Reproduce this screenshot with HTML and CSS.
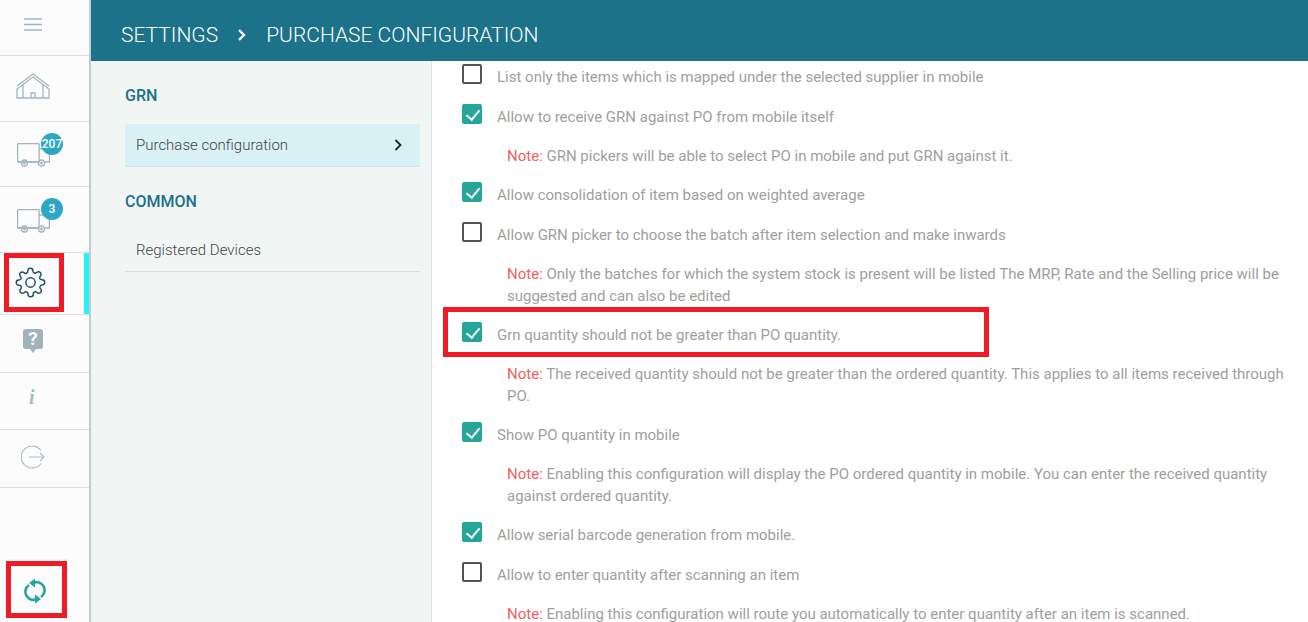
FILE: index.html
```html
<!DOCTYPE html>
<html lang="en">
<head>
  <meta charset="UTF-8">
  <title>Purchase configuration</title>
  <link rel="stylesheet" href="styles.css">
</head>
<body>
  <nav class="sidebar">
    <div class="side-row row-menu">
      <svg width="18" height="13" viewBox="0 0 18 13"><path d="M0 1h18M0 6.500h18M0 12h18" stroke="#a3b5bd" stroke-width="1.500" fill="none"/></svg>
    </div>
    <div class="side-row row-home">
      <svg width="34" height="26" viewBox="0 0 34 26" fill="none" stroke="#a3b5bd" stroke-width="1.300"><path d="M1 13 17 1l16 12"/><path d="M1 25V16L17 4l16 12v9zM7 25V12M27 25V12M15 25v-5h4v5"/></svg>
    </div>
    <div class="side-row row-truck">
      <svg width="33" height="24" viewBox="0 0 33 24" fill="none" stroke="#a3b5bd" stroke-width="1.300"><rect x=".6" y=".6" width="21.500" height="18.400" rx="1"/><path d="M22 6h6l4.400 5v8H28M.6 19H4M11 19h10"/><circle cx="7.500" cy="20" r="3"/><circle cx="7.500" cy="20" r=".8"/><circle cx="24.500" cy="20" r="3"/><circle cx="24.500" cy="20" r=".8"/></svg>
      <span class="badge">207</span>
    </div>
    <div class="side-row row-truck2">
      <svg width="33" height="24" viewBox="0 0 33 24" fill="none" stroke="#a3b5bd" stroke-width="1.300"><rect x=".6" y=".6" width="21.500" height="18.400" rx="1"/><path d="M22 6h6l4.400 5v8H28M.6 19H4M11 19h10"/><circle cx="7.500" cy="20" r="3"/><circle cx="7.500" cy="20" r=".8"/><circle cx="24.500" cy="20" r="3"/><circle cx="24.500" cy="20" r=".8"/></svg>
      <span class="badge">3</span>
    </div>
    <div class="side-row row-gear active">
      <svg width="31" height="31" viewBox="0 0 24 24" fill="none" stroke="#1d5266" stroke-width="1.150" stroke-linejoin="round"><circle cx="12" cy="12" r="3.600"/><path d="M19.400 15a1.650 1.650 0 0 0 .33 1.820l.06.06a2 2 0 1 1-2.830 2.830l-.06-.06a1.650 1.650 0 0 0-2.800 1.170V21a2 2 0 1 1-4 0v-.09A1.650 1.650 0 0 0 7.300 19.730l-.06.06a2 2 0 1 1-2.830-2.830l.06-.06a1.650 1.650 0 0 0-1.170-2.800H3a2 2 0 1 1 0-4h.09A1.650 1.650 0 0 0 4.270 7.300l-.06-.06a2 2 0 1 1 2.830-2.830l.06.06a1.650 1.650 0 0 0 2.800-1.170V3a2 2 0 1 1 4 0v.09a1.650 1.650 0 0 0 2.800 1.170l.06-.06a2 2 0 1 1 2.830 2.830l-.06.06a1.650 1.650 0 0 0 1.170 2.800H21a2 2 0 1 1 0 4h-.09a1.650 1.650 0 0 0-1.510 1.110z"/></svg>
    </div>
    <div class="side-row row-help">
      <span class="help-icon">?</span>
    </div>
    <div class="side-row row-info">
      <span class="info-icon">i</span>
    </div>
    <div class="side-row row-exit">
      <svg width="24" height="24" viewBox="0 0 24 24" fill="none" stroke="#a9bec6" stroke-width="1.200"><path d="M20 5.500A11 11 0 1 0 20 18.500"/><path d="M8 12h15M19 8l4 4-4 4"/></svg>
    </div>
    <div class="side-sync">
      <svg width="22" height="26" viewBox="0 0 22 26" fill="none"><path d="M8 5.500A8 8 0 0 1 17 19" stroke="#26a69a" stroke-width="2.600"/><path d="M14 20.500A8 8 0 0 1 5 7" stroke="#26a69a" stroke-width="2.600"/><path d="M11 .5v9L5 5zM11 16.500v9l6-4.500z" fill="#26a69a"/></svg>
    </div>
  </nav>

  <div class="main">
    <header class="topbar">
      <span>SETTINGS</span>
      <svg width="10" height="14" viewBox="0 0 10 14"><path d="M2 2l5 5-5 5" stroke="#fff" stroke-width="2.400" fill="none"/></svg>
      <span>PURCHASE CONFIGURATION</span>
    </header>
    <div class="body-wrap">
      <aside class="subnav">
        <h3>GRN</h3>
        <div class="sub-item selected">
          Purchase configuration
          <svg width="8" height="12" viewBox="0 0 8 12"><path d="M1.500 1l5 5-5 5" stroke="#222" stroke-width="1.800" fill="none"/></svg>
        </div>
        <h3 class="second">COMMON</h3>
        <div class="sub-item">Registered Devices</div>
      </aside>
      <section class="content">
        <div class="list">
          <div class="opt"><span class="box"></span>List only the items which is mapped under the selected supplier in mobile</div>
          <div class="opt"><span class="box on"></span>Allow to receive GRN against PO from mobile itself</div>
          <p class="note"><b>Note:</b> GRN pickers will be able to select PO in mobile and put GRN against it.</p>
          <div class="opt"><span class="box on"></span>Allow consolidation of item based on weighted average</div>
          <div class="opt"><span class="box"></span>Allow GRN picker to choose the batch after item selection and make inwards</div>
          <p class="note"><b>Note:</b> Only the batches for which the system stock is present will be listed The MRP, Rate and the Selling price will be suggested and can also be edited</p>
          <div class="opt"><span class="box on"></span>Grn quantity should not be greater than PO quantity.</div>
          <p class="note"><b>Note:</b> The received quantity should not be greater than the ordered quantity. This applies to all items received through PO.</p>
          <div class="opt"><span class="box on"></span>Show PO quantity in mobile</div>
          <p class="note"><b>Note:</b> Enabling this configuration will display the PO ordered quantity in mobile. You can enter the received quantity against ordered quantity.</p>
          <div class="opt"><span class="box on"></span>Allow serial barcode generation from mobile.</div>
          <div class="opt"><span class="box"></span>Allow to enter quantity after scanning an item</div>
          <p class="note"><b>Note:</b> Enabling this configuration will route you automatically to enter quantity after an item is scanned.</p>
        </div>
      </section>
    </div>
  </div>

  <div class="mark mark-gear"></div>
  <div class="mark mark-sync"></div>
  <div class="mark mark-row"></div>
</body>
</html>
```

FILE: styles.css
```css
* {
  box-sizing: border-box;
}
html, body {
  height: 100%;
}
body {
  margin: 0;
  display: flex;
  overflow: hidden;
  font-family: Roboto, "Liberation Sans", sans-serif;
  font-size: 14px;
  background-color: #ffffff;
}

/* Sidebar */
.sidebar {
  width: 91px;
  flex-shrink: 0;
  display: flex;
  flex-direction: column;
  background-color: #fcfcfc;
  border-right: 2px solid #c6cbcb;
}
.side-row {
  position: relative;
  display: flex;
  align-items: center;
  justify-content: flex-start;
  border-bottom: 1px solid #dcdedf;
}
.row-menu { height: 56px; padding: 0 0 6px 24px; }
.row-home { height: 66px; padding: 0 0 5px 16px; }
.row-truck { height: 65px; padding: 2px 0 0 17px; }
.row-truck2 { height: 66px; padding: 2px 0 0 17px; }
.row-gear { height: 62px; padding: 0 0 3px 15px; }
.row-help { height: 58px; padding: 0 0 9px 23px; }
.row-info { height: 57px; padding: 0 0 7px 29px; }
.row-exit { height: 58px; padding: 0 0 3px 21px; }
.badge {
  position: absolute;
  top: 11px;
  left: 41px;
  width: 22px;
  height: 22px;
  border-radius: 50%;
  background-color: #2ea7c4;
  color: #ffffff;
  font-size: 12px;
  font-weight: 500;
  line-height: 22px;
  text-align: center;
}
.active::after {
  content: "";
  position: absolute;
  top: 0;
  right: 0;
  bottom: 0;
  width: 5px;
  background-color: #23f2fd;
}
.help-icon {
  position: relative;
  display: block;
  width: 20px;
  height: 20px;
  border-radius: 3px;
  background-color: #a0b2ba;
  color: #ffffff;
  font-size: 19px;
  font-weight: 700;
  line-height: 20px;
  text-align: center;
}
.help-icon::after {
  content: "";
  position: absolute;
  left: 7px;
  bottom: -4px;
  border-top: 4px solid #a0b2ba;
  border-left: 3px solid transparent;
  border-right: 3px solid transparent;
}
.info-icon {
  color: #a9bac2;
  font-family: "Liberation Serif", serif;
  font-size: 20px;
  font-style: italic;
  font-weight: 700;
}
.side-sync {
  margin-top: auto;
  height: 62px;
  padding: 0 0 0 24px;
  display: flex;
  align-items: center;
}

/* Main area */
.main {
  flex: 1;
  min-width: 0;
  display: flex;
  flex-direction: column;
}
.topbar {
  height: 61px;
  flex-shrink: 0;
  display: flex;
  align-items: center;
  gap: 19px;
  padding: 8px 0 0 30px;
  background-color: #1b7289;
  color: #ffffff;
  font-size: 21px;
  font-weight: 300;
}
.body-wrap {
  flex: 1;
  min-height: 0;
  display: flex;
}
.subnav {
  width: 341px;
  flex-shrink: 0;
  padding: 25px 11px 0 34px;
  background-color: #f1f5f4;
  border-right: 1px solid #dfe2e2;
}
.subnav h3 {
  margin: 0 0 19px;
  color: #1b7289;
  font-size: 16px;
  font-weight: 500;
  line-height: 19px;
}
.subnav h3.second {
  margin-top: 25px;
  margin-bottom: 18px;
}
.sub-item {
  height: 43px;
  display: flex;
  align-items: center;
  justify-content: space-between;
  padding: 0 18px 0 11px;
  color: #444;
  font-size: 15px;
  font-weight: 300;
  border-bottom: 1px solid #d9dfdf;
}
.sub-item.selected {
  background-color: #d9f0f5;
  border-bottom-color: #d3e4e8;
  border-radius: 2px;
}
.content {
  flex: 1;
  min-width: 0;
  overflow: hidden;
  padding: 0 20px 0 30px;
}
.list {
  margin-top: -4px;
}
.opt {
  height: 40px;
  display: flex;
  align-items: center;
  color: #a09e9e;
  font-size: 15px;
}
.box {
  width: 20px;
  height: 20px;
  margin: -6px 15px 0 0;
  flex-shrink: 0;
  border: 2px solid #555;
  border-radius: 2px;
  background-color: #ffffff;
}
.box.on {
  border: 0;
  background-color: #26a69a;
  position: relative;
}
.box.on::after {
  content: "";
  position: absolute;
  left: 7px;
  top: 3px;
  width: 6px;
  height: 11px;
  border: solid #ffffff;
  border-width: 0 2px 2px 0;
  transform: rotate(40deg);
}
.note {
  margin: 0;
  padding: 8px 0 8px 45px;
  color: #a09e9e;
  font-size: 15px;
  line-height: 22px;
}
.note b {
  color: #f0605f;
  font-weight: 400;
}

/* Red annotation boxes drawn over the screenshot */
.mark {
  position: absolute;
  border: 5px solid #ee1c25;
}
.mark-gear { left: 4px; top: 253px; width: 60px; height: 59px; }
.mark-sync { left: 6px; top: 561px; width: 61px; height: 57px; }
.mark-row { left: 443px; top: 307px; width: 546px; height: 50px; }
```
